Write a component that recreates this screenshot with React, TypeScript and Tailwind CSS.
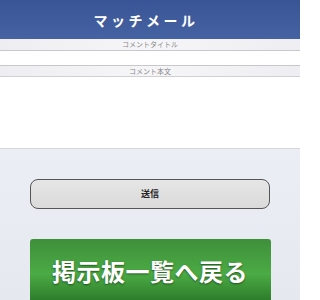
export default function App() {
  const jp = { fontFamily: '"Noto Sans CJK JP", "Noto Sans", sans-serif' };
  return (
    <div className="w-[300px] h-[300px] overflow-hidden bg-[#e9ebf3] flex flex-col" style={jp}>
      <div className="h-[39px] shrink-0 bg-gradient-to-b from-[#3a5596] to-[#4562a2] flex items-center justify-center">
        <span className="text-white text-[14px] font-bold tracking-[3.5px] mr-[8px] leading-none">マッチメール</span>
      </div>
      <div className="h-[12px] shrink-0 bg-gradient-to-r from-[#eeeef2] via-[#f6f6f8] to-[#eeeef2] border-b border-[#c8c8cc] text-[7px] text-[#888] text-center leading-[11px]">
        コメントタイトル
      </div>
      <div className="h-[15px] shrink-0 bg-white border-b border-[#c8c8cc]" />
      <div className="h-[11px] shrink-0 bg-gradient-to-r from-[#eeeef2] via-[#f6f6f8] to-[#eeeef2] border-b border-[#d0d0d4] text-[7px] text-[#888] text-center leading-[10px]">
        コメント本文
      </div>
      <div className="h-[72px] shrink-0 bg-white border-b border-[#d6d6dc]" />
      <div className="flex-1 bg-gradient-to-b from-[#eceef5] to-[#e6e8f0] flex flex-col items-center pt-[30px]">
        <div className="w-[240px] h-[30px] rounded-[8px] border-[1.5px] border-[#555] bg-gradient-to-b from-[#e6e6e6] to-[#dadada] flex items-center justify-center">
          <span className="text-[9px] font-bold text-[#222]">送信</span>
        </div>
        <div className="mt-[30px] w-[241px] h-[70px] rounded-[3px] bg-gradient-to-b from-[#3f8f3a] via-[#4bab44] to-[#246f22] flex items-start justify-center pt-[20px]">
          <span className="text-white text-[24px] font-bold leading-none tracking-[0.5px] [text-shadow:0_1px_2px_rgba(0,0,0,0.5)]">掲示板一覧へ戻る</span>
        </div>
      </div>
    </div>
  );
}
